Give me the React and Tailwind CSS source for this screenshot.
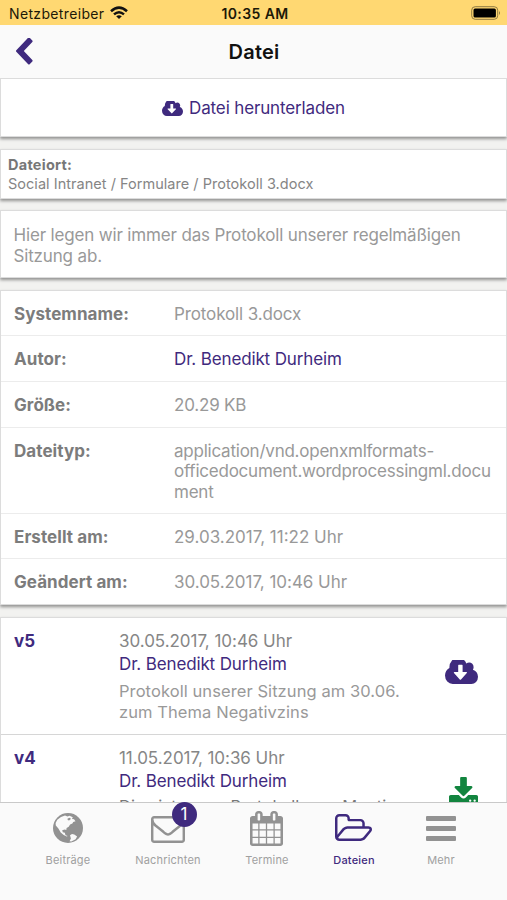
const icons = {
  chevron: {
    box: "410 64 1060 1600",
    d: "M1427 301l-531 531 531 531q19 19 19 45t-19 45l-166 166q-19 19-45 19t-45-19l-742-742q-19-19-19-45t19-45l742-742q19-19 45-19t45 19l166 166q19 19 19 45t-19 45z",
  },
  cloud: {
    box: "-64 256 1920 1280",
    d: "M1216 928q0-14-9-23t-23-9h-224v-352q0-13-9.500-22.500t-22.500-9.500h-192q-13 0-22.500 9.500t-9.500 22.500v352h-224q-13 0-22.500 9.500t-9.500 22.500q0 14 9 23l352 352q9 9 23 9t23-9l351-351q10-12 10-24zm640 224q0 159-112.500 271.500t-271.500 112.500h-1088q-185 0-316.500-131.500t-131.500-316.500q0-130 70-240t188-165q-2-30-2-43 0-212 150-362t362-150q156 0 285.500 87t188.500 231q71-62 166-62 106 0 181 75t75 181q0 76-41 138 130 31 213.500 135.500t83.500 238.500z",
  },
  download: {
    box: "64 0 1664 1536",
    d: "M1344 1344q0-26-19-45t-45-19-45 19-19 45 19 45 45 19 45-19 19-45zm256 0q0-26-19-45t-45-19-45 19-19 45 19 45 45 19 45-19 19-45zm128-224v320q0 40-28 68t-68 28h-1472q-40 0-68-28t-28-68v-320q0-40 28-68t68-28h465l135 136q58 56 136 56t136-56l136-136h464q40 0 68 28t28 68zm-325-569q17 41-14 70l-448 448q-18 19-45 19t-45-19l-448-448q-31-29-14-70 17-39 59-39h256v-448q0-26 19-45t45-19h256q26 0 45 19t19 45v448h256q42 0 59 39z",
  },
  mail: {
    box: "0 256 1792 1408",
    d: "M1664 1504v-768q-32 36-69 66-268 206-426 338-51 43-83 67t-86.500 48.500-102.500 24.500h-2q-48 0-102.500-24.500t-86.500-48.500-83-67q-158-132-426-338-37-30-69-66v768q0 13 9.500 22.500t22.500 9.500h1472q13 0 22.500-9.500t9.500-22.500zm0-1051v-24.500l-.5-13-3-12.500-5.500-9-9-7.500-14-2.500h-1472q-13 0-22.500 9.500t-9.500 22.500q0 168 147 284 193 152 401 317 6 5 35 29.500t46 37.500 44.500 31.500 50.500 27.500 43 9h2q20 0 43-9t50.500-27.500 44.500-31.500 46-37.500 35-29.500q208-165 401-317 54-43 100.500-115.500t46.500-131.500zm128-37v1088q0 66-47 113t-113 47h-1472q-66 0-113-47t-47-113v-1088q0-66 47-113t113-47h1472q66 0 113 47t47 113z",
  },
  calendar: {
    box: "64 0 1664 1792",
    d: "M192 1664h288v-288h-288v288zm352 0h320v-288h-320v288zm-352-352h288v-320h-288v320zm352 0h320v-320h-320v320zm-352-384h288v-288h-288v288zm736 736h320v-288h-320v288zm-384-736h320v-288h-320v288zm768 736h288v-288h-288v288zm-384-352h320v-320h-320v320zm-352-864v-288q0-13-9.500-22.500t-22.500-9.500h-64q-13 0-22.500 9.500t-9.500 22.500v288q0 13 9.500 22.500t22.500 9.500h64q13 0 22.500-9.500t9.500-22.500zm736 864h288v-320h-288v320zm-384-384h320v-288h-320v288zm384 0h288v-288h-288v288zm32-480v-288q0-13-9.500-22.500t-22.500-9.500h-64q-13 0-22.500 9.500t-9.500 22.500v288q0 13 9.500 22.500t22.500 9.500h64q13 0 22.500-9.500t9.500-22.500zm384-64v1280q0 52-38 90t-90 38h-1408q-52 0-90-38t-38-90v-1280q0-52 38-90t90-38h128v-96q0-66 47-113t113-47h64q66 0 113 47t47 113v96h384v-96q0-66 47-113t113-47h64q66 0 113 47t47 113v96h128q52 0 90 38t38 90z",
  },
  folder: {
    box: "64 128 1909 1408",
    d: "M1845 931q0-35-53-35h-1088q-40 0-85.500 21.500t-71.500 52.500l-294 363q-18 24-18 40 0 35 53 35h1088q40 0 86-22t71-53l294-363q18-22 18-39zm-1141-163h768v-160q0-40-28-68t-68-28h-576q-40 0-68-28t-28-68v-64q0-40-28-68t-68-28h-320q-40 0-68 28t-28 68v853l256-315q44-53 116-87.500t140-34.500zm1269 163q0 62-46 120l-295 363q-43 53-116 87.500t-140 34.500h-1088q-92 0-158-66t-66-158v-960q0-92 66-158t158-66h320q92 0 158 66t66 158v32h544q92 0 158 66t66 158v160h192q54 0 99 24.500t67 70.500q15 32 15 68z",
  },
};

function Icon({ name, className }) {
  return (
    <svg viewBox={icons[name].box} preserveAspectRatio="none" fill="currentColor" className={className}>
      <path d={icons[name].d} />
    </svg>
  );
}

function Globe() {
  return (
    <svg viewBox="0 0 30 30" className="h-[30px] w-[30px]">
      <circle cx="15" cy="15" r="15" fill="currentColor" />
      <path
        d="M4.300 6.800L8 4l4-1.500 2.500 1 2-.8 3.300 1.500-.8 1.800 2 .2 1.500 2-2.300.8-.8 1.400-2.300 1-1.400 2.400-2.100 1.300-.3 2-1.500-.6-2.600.8.600 1.900 2 .6.700 2.500 2.200.8-1 .4-3-1.600-3-2.300-2.300-4L2.800 12.500l-.2-2.600z"
        fill="#fafafa"
      />
      <path d="M14.600 5.400l2.300-.7 1 1.400-1.800 1.500-1.500-.7z" fill="currentColor" />
      <path d="M17 22.300l2-1.300 2.300.6 2.800 2-1.500 2.600-4.300 2.300-1.700-.2 1.300-2.900z" fill="#fafafa" />
    </svg>
  );
}

function Card({ className, children }) {
  return (
    <section className={`shrink-0 border border-[#dcdcdc] bg-white shadow-[0_2px_3px_rgba(0,0,0,0.4)] ${className}`}>
      {children}
    </section>
  );
}

const details = [
  ["Systemname:", "Protokoll 3.docx", "h-[45px]", "tracking-[-0.120px] text-[#999]"],
  ["Autor:", "Dr. Benedikt Durheim", "h-[46px]", "tracking-[-0.140px] text-[#3f2a7e]"],
  ["Größe:", "20.29 KB", "h-[46px]", "tracking-[-0.200px] text-[#999]"],
  [
    "Dateityp:",
    "application/vnd.openxmlformats-officedocument.wordprocessingml.document",
    "h-[86px]",
    "tracking-[-0.230px] text-[#999]",
  ],
  ["Erstellt am:", "29.03.2017, 11:22 Uhr", "h-[45px]", "text-[#999]"],
  ["Geändert am:", "30.05.2017, 10:46 Uhr", "h-[45px]", "tracking-[-0.040px] text-[#999]"],
];

function Version({ label, date, text, children }) {
  return (
    <div className="flex h-[117px] shrink-0 border-b border-[#d6d6d6] pl-[13px] pt-[12px]">
      <div className="w-[105px] text-[17px] font-bold leading-[23px] text-[#3f2a7e]">{label}</div>
      <div className="w-[300px]">
        <div className="text-[17px] leading-[23px] tracking-[-0.040px] text-[#868686]">{date}</div>
        <div className="text-[17px] leading-[23px] tracking-[-0.140px] text-[#3f2a7e]">Dr. Benedikt Durheim</div>
        {text}
      </div>
      <div className="flex-1 pl-[26px]">{children}</div>
    </div>
  );
}

function Tab({ label, active, className, children }) {
  return (
    <div className={`flex flex-col items-center ${active ? "text-[#3f2a7e]" : "text-[#929292]"} ${className}`}>
      <div className="flex h-[50px] items-center">{children}</div>
      <div className={`text-[11px] leading-[14px] tracking-[0.180px] ${active ? "font-medium" : "text-[#a0a0a0]"}`}>{label}</div>
    </div>
  );
}

export default function App() {
  return (
    <div className="flex h-[900px] w-[507px] flex-col overflow-hidden bg-[#f2f2f0] font-['Inter','Liberation_Sans',sans-serif]">
      <div className="grid h-[25px] shrink-0 grid-cols-3 items-center bg-[#ffd872] pl-[9px] pr-[6px] pt-[2px] text-[14px] text-[#1c1808]">
        <div className="flex items-center gap-[6px]">
          <span className="tracking-[0.350px]">Netzbetreiber</span>
          <svg viewBox="0 0 18 14" className="-mt-px h-[14px] w-[18px]" fill="none" stroke="#111" strokeWidth="2.500">
            <path d="M1 5.200Q9-2 17 5.200M4 8.400Q9 4 14 8.400" />
            <path d="M9 13L6.200 10.300Q9 8 11.800 10.300Z" fill="#111" stroke="none" />
          </svg>
        </div>
        <div className="text-center font-semibold tracking-[0.400px]">10:35 AM</div>
        <div className="flex justify-end">
          <svg viewBox="0 0 30 14" className="-mt-[2px] h-[14px] w-[30px]">
            <rect x="0.700" y="0.700" width="26" height="12.600" rx="3.500" fill="none" stroke="#8f7a42" />
            <rect x="2.500" y="2.500" width="22.400" height="9" rx="1.500" fill="#000" />
            <path d="M28 5q2 2 0 4z" fill="#8f7a42" />
          </svg>
        </div>
      </div>
      <header className="grid h-[53px] shrink-0 grid-cols-[60px_1fr_60px] items-center bg-[#fafafa]">
        <Icon name="chevron" className="ml-[16px] h-[27px] w-[17px] text-[#3f2a7e]" />
        <h1 className="pl-px text-center text-[20px] font-semibold tracking-[0.200px] text-[#111]">Datei</h1>
      </header>
      <main className="flex min-h-0 flex-1 flex-col overflow-hidden">
        <Card className="flex h-[59px] items-center justify-center gap-[6px] pt-[2px] text-[17px] text-[#3f2a7e]">
          <Icon name="cloud" className="-mt-px h-[15px] w-[21px]" />
          <span className="tracking-[-0.140px]">Datei herunterladen</span>
        </Card>
        <Card className="mt-[12px] h-[50px] px-[7px] pt-[5px] text-[14.500px] leading-[19px] text-[#858585]">
          <div className="font-bold tracking-[0.250px] text-[#777]">Dateiort:</div>
          <div className="tracking-[0.030px]">Social Intranet / Formulare / Protokoll 3.docx</div>
        </Card>
        <Card className="mt-[11px] h-[68px] whitespace-pre px-[12.500px] pt-[14px] text-[17px] leading-[21px] tracking-[-0.160px] text-[#999]">
          {"Hier legen wir immer das Protokoll unserer regelmäßigen\nSitzung ab."}
        </Card>
        <Card className="mt-[12px] h-[315px]">
          {details.map(([key, value, height, tone]) => (
            <div key={key} className={`flex border-b border-[#ececec] pl-[13px] pt-[12.500px] text-[17px] leading-[20.700px] last:border-b-0 ${height}`}>
              <div className="w-[160px] shrink-0 font-bold tracking-[0.060px] text-[#7c7c7c]">{key}</div>
              <div className={`w-[320px] break-words ${tone}`}>{value}</div>
            </div>
          ))}
        </Card>
        <Card className="mt-[12px] h-[240px]">
          <Version
            label="v5"
            date="30.05.2017, 10:46 Uhr"
            text={
              <div className="mt-[4.500px] whitespace-pre text-[16.500px] leading-[21px] tracking-[0.080px] text-[#999]">
                {"Protokoll unserer Sitzung am 30.06.\nzum Thema Negativzins"}
              </div>
            }
          >
            <Icon name="cloud" className="mt-[30px] h-[24px] w-[33px] text-[#3f2a7e]" />
          </Version>
          <Version
            label="v4"
            date="11.05.2017, 10:36 Uhr"
            text={
              <div className="mt-[3px] whitespace-pre text-[16.500px] leading-[21px] tracking-[0.080px] text-[#777]">
                Dies ist unser Protokoll zum Meeting
              </div>
            }
          >
            <Icon name="download" className="ml-[4px] mt-[30px] h-[27px] w-[29px] text-[#12853f]" />
          </Version>
        </Card>
      </main>
      <nav className="flex h-[98px] shrink-0 justify-center border-t border-[#c9c9c9] bg-[#fafafa] pl-px">
        <Tab label="Beiträge" className="w-[100px]">
          <Globe />
        </Tab>
        <Tab label="Nachrichten" className="w-[100px]">
          <div className="relative mr-px mt-[2px]">
            <Icon name="mail" className="h-[27px] w-[34px]" />
            <span className="absolute -right-[12px] -top-[14px] flex h-[25px] w-[25px] items-center justify-center rounded-full bg-[#3f2a7e] text-[17px] leading-[20px] text-white">1</span>
          </div>
        </Tab>
        <Tab label="Termine" className="w-[98px]">
          <Icon name="calendar" className="mr-px h-[35px] w-[33px]" />
        </Tab>
        <Tab label="Dateien" active className="w-[76px]">
          <Icon name="folder" className="-mt-[2px] mr-[2px] h-[27px] w-[37px]" />
        </Tab>
        <Tab label="Mehr" className="w-[98px]">
          <div className="flex w-[30px] flex-col gap-[5px]">
            <span className="h-[5px] rounded-[1px] bg-[#929292]" />
            <span className="h-[5px] rounded-[1px] bg-[#929292]" />
            <span className="h-[5px] rounded-[1px] bg-[#929292]" />
          </div>
        </Tab>
      </nav>
    </div>
  );
}
